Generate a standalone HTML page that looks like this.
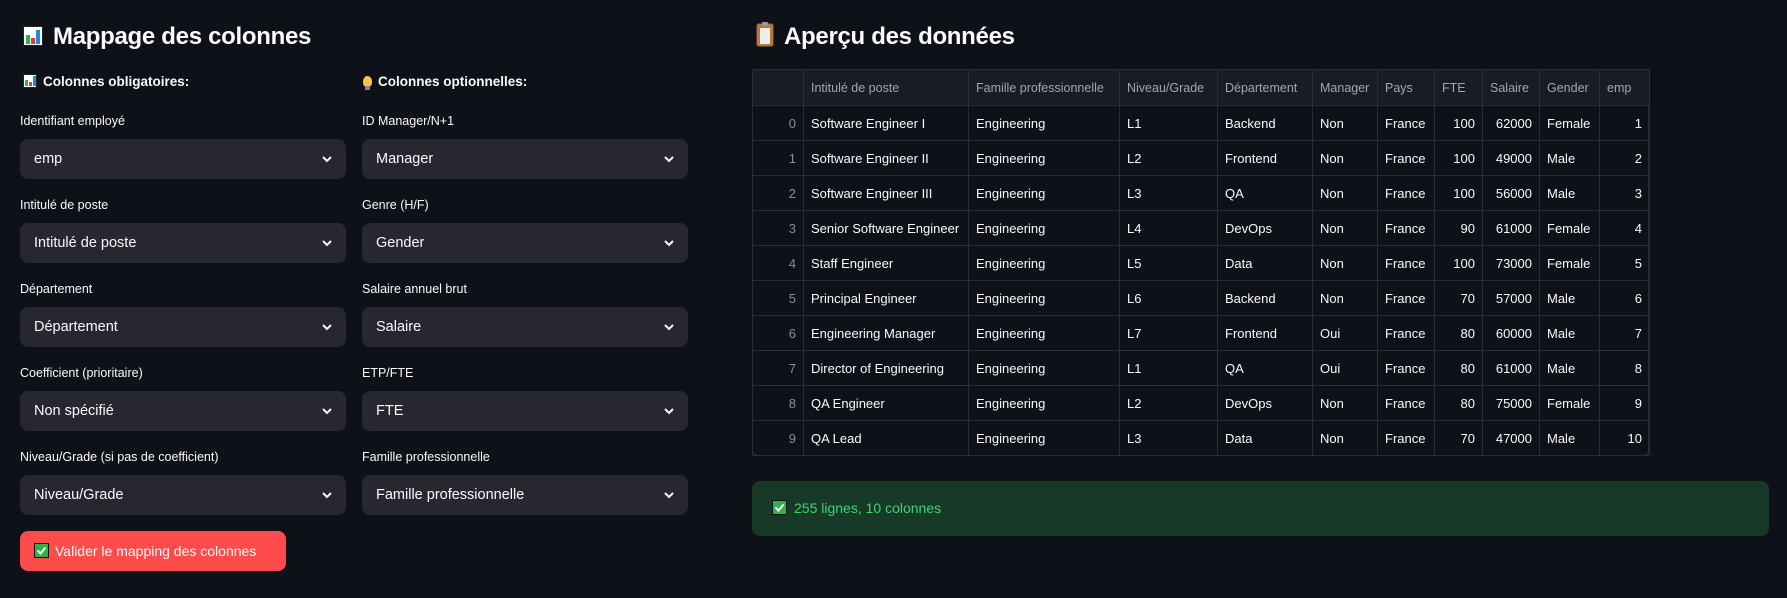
<!DOCTYPE html>
<html><head><meta charset="utf-8"><style>
*{box-sizing:border-box;margin:0;padding:0}
body{width:1787px;height:598px;background:#0e1117;color:#fafafa;font-family:"Liberation Sans",sans-serif;position:relative;overflow:hidden}
.abs{position:absolute}
h1{position:absolute;font-size:24px;font-weight:bold;line-height:30px;white-space:nowrap;letter-spacing:-0.3px}
.sub{position:absolute;font-size:13.5px;font-weight:bold;white-space:nowrap;line-height:20px}
.lab{position:absolute;font-size:12.5px;white-space:nowrap;line-height:16px;color:#fafafa}
.sel{position:absolute;height:40px;width:326px;background:#262730;border-radius:8px;font-size:14.5px;line-height:40px;padding-left:14px;color:#fafafa}
.sel svg{position:absolute;right:13px;top:15px}
.chart{display:inline-block;width:18px;height:18px;background:#fff;border:1px solid #222;position:relative;vertical-align:middle}
.chart i{position:absolute;bottom:1px;width:4px}
table{position:absolute;left:752px;top:69px;width:897px;border-collapse:collapse;table-layout:fixed;font-size:13px}
td,th{border:1px solid #2b2d35;height:35px;padding:0 7px;white-space:nowrap;overflow:hidden;text-align:left;font-weight:normal}
th{background:#1a1c24;color:#a3a6ae;height:36px;font-size:12.5px}
td.i{color:#8b8e96;text-align:right}
td.n{text-align:right}
.wrap{position:absolute;left:752px;top:69px;width:897px;height:387px;border:1px solid #2b2d35;border-radius:6px}
</style></head><body>

<h1 style="left:23px;top:22px"><span class="chart" style="width:20px;height:20px;margin-right:10px;vertical-align:-2px"><i style="left:2px;height:9px;background:#2bb24c"></i><i style="left:7px;height:6px;background:#e53935"></i><i style="left:12px;height:14px;background:#1e88e5"></i></span>Mappage des colonnes</h1>

<h1 style="left:756px;top:22px"><span style="display:inline-block;width:18px;height:24px;background:#b07a45;border-radius:3px;position:relative;vertical-align:-3px;margin-right:10px;border:1px solid #5a3a1a"><span style="position:absolute;left:3px;top:4px;width:10px;height:16px;background:#eee"></span><span style="position:absolute;left:5px;top:-2px;width:6px;height:4px;background:#999;border-radius:1px"></span></span>Aperçu des données</h1>

<div class="sub" style="left:23px;top:72px"><span class="chart" style="width:14px;height:14px;margin-right:6px;vertical-align:-2px"><i style="left:1px;height:6px;background:#2bb24c;width:3px"></i><i style="left:5px;height:4px;background:#e53935;width:3px"></i><i style="left:9px;height:10px;background:#1e88e5;width:3px"></i></span>Colonnes obligatoires:</div>
<div class="sub" style="left:363px;top:72px"><span style="display:inline-block;width:9px;height:11px;background:#f7c548;border-radius:50% 50% 40% 40%;margin-right:6px;vertical-align:-1px;position:relative"><span style="position:absolute;left:2px;top:10px;width:5px;height:4px;background:#888"></span></span>Colonnes optionnelles:</div>

<div class="lab" style="left:20px;top:113px">Identifiant employé</div>
<div class="lab" style="left:362px;top:113px">ID Manager/N+1</div>
<div class="sel" style="left:20px;top:139px">emp<svg width="12" height="10" viewBox="0 0 12 10"><path d="M2 3l4 4 4-4" stroke="#fafafa" stroke-width="2" fill="none"/></svg></div>
<div class="sel" style="left:362px;top:139px">Manager<svg width="12" height="10" viewBox="0 0 12 10"><path d="M2 3l4 4 4-4" stroke="#fafafa" stroke-width="2" fill="none"/></svg></div>

<div class="lab" style="left:20px;top:197px">Intitulé de poste</div>
<div class="lab" style="left:362px;top:197px">Genre (H/F)</div>
<div class="sel" style="left:20px;top:223px">Intitulé de poste<svg width="12" height="10" viewBox="0 0 12 10"><path d="M2 3l4 4 4-4" stroke="#fafafa" stroke-width="2" fill="none"/></svg></div>
<div class="sel" style="left:362px;top:223px">Gender<svg width="12" height="10" viewBox="0 0 12 10"><path d="M2 3l4 4 4-4" stroke="#fafafa" stroke-width="2" fill="none"/></svg></div>

<div class="lab" style="left:20px;top:281px">Département</div>
<div class="lab" style="left:362px;top:281px">Salaire annuel brut</div>
<div class="sel" style="left:20px;top:307px">Département<svg width="12" height="10" viewBox="0 0 12 10"><path d="M2 3l4 4 4-4" stroke="#fafafa" stroke-width="2" fill="none"/></svg></div>
<div class="sel" style="left:362px;top:307px">Salaire<svg width="12" height="10" viewBox="0 0 12 10"><path d="M2 3l4 4 4-4" stroke="#fafafa" stroke-width="2" fill="none"/></svg></div>

<div class="lab" style="left:20px;top:365px">Coefficient (prioritaire)</div>
<div class="lab" style="left:362px;top:365px">ETP/FTE</div>
<div class="sel" style="left:20px;top:391px">Non spécifié<svg width="12" height="10" viewBox="0 0 12 10"><path d="M2 3l4 4 4-4" stroke="#fafafa" stroke-width="2" fill="none"/></svg></div>
<div class="sel" style="left:362px;top:391px">FTE<svg width="12" height="10" viewBox="0 0 12 10"><path d="M2 3l4 4 4-4" stroke="#fafafa" stroke-width="2" fill="none"/></svg></div>

<div class="lab" style="left:20px;top:449px">Niveau/Grade (si pas de coefficient)</div>
<div class="lab" style="left:362px;top:449px">Famille professionnelle</div>
<div class="sel" style="left:20px;top:475px">Niveau/Grade<svg width="12" height="10" viewBox="0 0 12 10"><path d="M2 3l4 4 4-4" stroke="#fafafa" stroke-width="2" fill="none"/></svg></div>
<div class="sel" style="left:362px;top:475px">Famille professionnelle<svg width="12" height="10" viewBox="0 0 12 10"><path d="M2 3l4 4 4-4" stroke="#fafafa" stroke-width="2" fill="none"/></svg></div>

<div class="abs" style="left:20px;top:531px;width:266px;height:40px;background:#ff4b4b;border-radius:8px;font-size:14px;line-height:40px;padding-left:14px;white-space:nowrap"><span style="display:inline-block;width:15px;height:15px;background:#2fb344;border:1px solid #111;vertical-align:-2px;margin-right:6px;position:relative"><svg width="13" height="13" viewBox="0 0 13 13" style="position:absolute;left:0;top:0"><path d="M2.5 6.5l3 3 5-6" stroke="#fff" stroke-width="2" fill="none"/></svg></span>Valider le mapping des colonnes</div>

<div class="wrap"></div>
<table>
<colgroup><col style="width:51px"><col style="width:165px"><col style="width:151px"><col style="width:98px"><col style="width:95px"><col style="width:65px"><col style="width:57px"><col style="width:48px"><col style="width:57px"><col style="width:60px"><col style="width:50px"></colgroup>
<tr><th></th><th>Intitulé de poste</th><th>Famille professionnelle</th><th>Niveau/Grade</th><th>Département</th><th>Manager</th><th>Pays</th><th>FTE</th><th>Salaire</th><th>Gender</th><th>emp</th></tr>
<tr><td class="i">0</td><td>Software Engineer I</td><td>Engineering</td><td>L1</td><td>Backend</td><td>Non</td><td>France</td><td class="n">100</td><td class="n">62000</td><td>Female</td><td class="n">1</td></tr>
<tr><td class="i">1</td><td>Software Engineer II</td><td>Engineering</td><td>L2</td><td>Frontend</td><td>Non</td><td>France</td><td class="n">100</td><td class="n">49000</td><td>Male</td><td class="n">2</td></tr>
<tr><td class="i">2</td><td>Software Engineer III</td><td>Engineering</td><td>L3</td><td>QA</td><td>Non</td><td>France</td><td class="n">100</td><td class="n">56000</td><td>Male</td><td class="n">3</td></tr>
<tr><td class="i">3</td><td>Senior Software Engineer</td><td>Engineering</td><td>L4</td><td>DevOps</td><td>Non</td><td>France</td><td class="n">90</td><td class="n">61000</td><td>Female</td><td class="n">4</td></tr>
<tr><td class="i">4</td><td>Staff Engineer</td><td>Engineering</td><td>L5</td><td>Data</td><td>Non</td><td>France</td><td class="n">100</td><td class="n">73000</td><td>Female</td><td class="n">5</td></tr>
<tr><td class="i">5</td><td>Principal Engineer</td><td>Engineering</td><td>L6</td><td>Backend</td><td>Non</td><td>France</td><td class="n">70</td><td class="n">57000</td><td>Male</td><td class="n">6</td></tr>
<tr><td class="i">6</td><td>Engineering Manager</td><td>Engineering</td><td>L7</td><td>Frontend</td><td>Oui</td><td>France</td><td class="n">80</td><td class="n">60000</td><td>Male</td><td class="n">7</td></tr>
<tr><td class="i">7</td><td>Director of Engineering</td><td>Engineering</td><td>L1</td><td>QA</td><td>Oui</td><td>France</td><td class="n">80</td><td class="n">61000</td><td>Male</td><td class="n">8</td></tr>
<tr><td class="i">8</td><td>QA Engineer</td><td>Engineering</td><td>L2</td><td>DevOps</td><td>Non</td><td>France</td><td class="n">80</td><td class="n">75000</td><td>Female</td><td class="n">9</td></tr>
<tr><td class="i">9</td><td>QA Lead</td><td>Engineering</td><td>L3</td><td>Data</td><td>Non</td><td>France</td><td class="n">70</td><td class="n">47000</td><td>Male</td><td class="n">10</td></tr>
</table>

<div class="abs" style="left:752px;top:481px;width:1017px;height:55px;background:#173928;border-radius:8px;font-size:14px;line-height:55px;padding-left:20px;color:#3dd56d;white-space:nowrap"><span style="display:inline-block;width:15px;height:15px;background:#2fb344;border:1px solid #111;vertical-align:-2px;margin-right:7px;position:relative"><svg width="13" height="13" viewBox="0 0 13 13" style="position:absolute;left:0;top:0"><path d="M2.5 6.5l3 3 5-6" stroke="#fff" stroke-width="2" fill="none"/></svg></span>255 lignes, 10 colonnes</div>

</body></html>
